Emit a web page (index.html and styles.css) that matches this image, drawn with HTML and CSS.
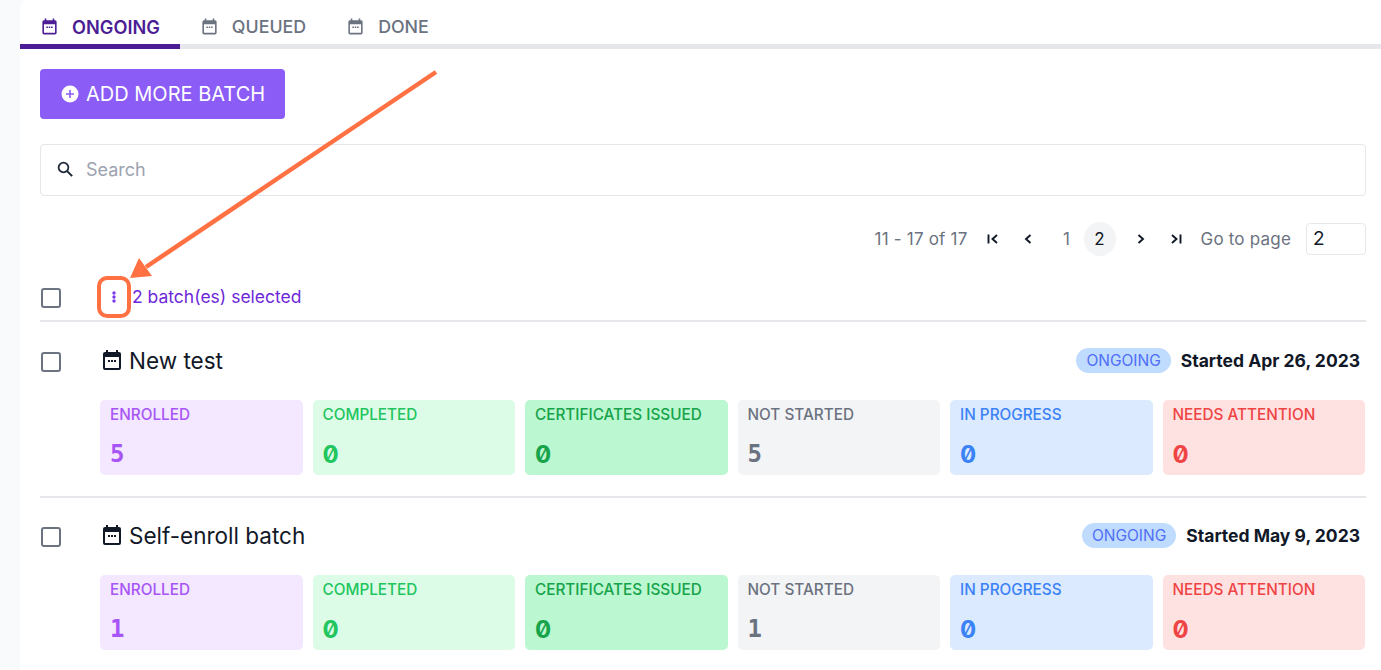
FILE: index.html
```html
<!DOCTYPE html>
<html>

<head>
  <meta charset="utf-8">
  <title>Batches</title>
  <link rel="stylesheet" href="styles.css">
</head>

<body>
  <svg width="0" height="0" class="defs">
    <symbol id="cal" viewBox="0 0 24 24">
      <path d="M19 4h-1V2h-2v2H8V2H6v2H5a2 2 0 0 0-2 2v14a2 2 0 0 0 2 2h14a2 2 0 0 0 2-2V6a2 2 0 0 0-2-2zm0 16H5V9h14v11zM8 12h2v2H8zm3 0h2v2h-2zm3 0h2v2h-2z" fill="currentColor"/>
    </symbol>
  </svg>
  <div class="panel">
    <div class="tabs">
      <a class="tab curr"><svg class="ico"><use href="#cal"/></svg>ONGOING</a>
      <a class="tab"><svg class="ico"><use href="#cal"/></svg>QUEUED</a>
      <a class="tab"><svg class="ico"><use href="#cal"/></svg>DONE</a>
    </div>
    <div class="cnt">
      <button class="add-btn">
        <svg width="18" height="18" viewBox="0 0 18 18"><circle cx="9" cy="9" r="8.5" fill="#fff"/><path d="M9 5v8M5 9h8" stroke="#8b5cf6" stroke-width="1.6"/></svg>
        ADD MORE BATCH
      </button>
      <div class="search">
        <svg width="18" height="18" viewBox="0 0 24 24"><circle cx="10" cy="10" r="6.500" fill="none" stroke="#1f2937" stroke-width="2.400"/><path d="M14.500 14.500 21.500 21.500" stroke="#1f2937" stroke-width="2.800"/></svg>
        <span>Search</span>
      </div>
      <div class="pager">
        <span class="range">11 - 17 of 17</span>
        <div class="pg-btns">
          <svg class="pg-ico" viewBox="0 0 16 16"><path d="M3.500 3.500v9M12 4 7.500 8l4.500 4" fill="none" stroke="#111827" stroke-width="1.900"/></svg>
          <svg class="pg-ico" viewBox="0 0 16 16"><path d="M10.500 4 6 8l4.500 4" fill="none" stroke="#111827" stroke-width="1.900"/></svg>
          <span class="pg-num">1</span>
          <span class="pg-num on">2</span>
          <svg class="pg-ico" viewBox="0 0 16 16"><path d="M5.500 4 10 8l-4.500 4" fill="none" stroke="#111827" stroke-width="1.900"/></svg>
          <svg class="pg-ico" viewBox="0 0 16 16"><path d="M12.500 3.500v9M4 4l4.500 4L4 12" fill="none" stroke="#111827" stroke-width="1.900"/></svg>
        </div>
        <span class="goto">Go to page</span>
        <div class="pg-input">2</div>
      </div>
      <div class="sel-row">
        <span class="check"></span>
        <div class="sel-info">
          <svg class="dots" width="4" height="12" viewBox="0 0 4 12"><circle cx="2" cy="2" r="1.700"/><circle cx="2" cy="6" r="1.700"/><circle cx="2" cy="10" r="1.700"/></svg>
          <span>2 batch(es) selected</span>
        </div>
      </div>

      <div class="batch">
        <span class="check"></span>
        <div class="batch-main">
          <div class="batch-head">
            <h3><svg class="ico-big"><use href="#cal"/></svg>New test</h3>
            <div class="batch-meta"><span class="badge">ONGOING</span><b>Started Apr 26, 2023</b></div>
          </div>
          <div class="stats">
            <div class="stat purple"><p>ENROLLED</p><strong>5</strong></div>
            <div class="stat green"><p>COMPLETED</p><strong class="nil">0</strong></div>
            <div class="stat mint"><p>CERTIFICATES ISSUED</p><strong class="nil">0</strong></div>
            <div class="stat gray"><p>NOT STARTED</p><strong>5</strong></div>
            <div class="stat blue"><p>IN PROGRESS</p><strong class="nil">0</strong></div>
            <div class="stat red"><p>NEEDS ATTENTION</p><strong class="nil">0</strong></div>
          </div>
        </div>
      </div>

      <div class="batch">
        <span class="check"></span>
        <div class="batch-main">
          <div class="batch-head">
            <h3><svg class="ico-big"><use href="#cal"/></svg>Self-enroll batch</h3>
            <div class="batch-meta"><span class="badge">ONGOING</span><b>Started May 9, 2023</b></div>
          </div>
          <div class="stats">
            <div class="stat purple"><p>ENROLLED</p><strong>1</strong></div>
            <div class="stat green"><p>COMPLETED</p><strong class="nil">0</strong></div>
            <div class="stat mint"><p>CERTIFICATES ISSUED</p><strong class="nil">0</strong></div>
            <div class="stat gray"><p>NOT STARTED</p><strong>1</strong></div>
            <div class="stat blue"><p>IN PROGRESS</p><strong class="nil">0</strong></div>
            <div class="stat red"><p>NEEDS ATTENTION</p><strong class="nil">0</strong></div>
          </div>
        </div>
      </div>
    </div>
  </div>

  <!-- annotation drawn over the screenshot -->
  <svg class="note" width="1381" height="670" viewBox="0 0 1381 670">
    <path d="M436 72 146 267" fill="none" stroke="#ff7043" stroke-width="4.500"/>
    <path d="M130 278 139 258 152 276z" fill="#ff7043"/>
    <rect x="99" y="278" width="30" height="38" rx="8" fill="none" stroke="#ff7043" stroke-width="4"/>
  </svg>
</body>

</html>
```

FILE: styles.css
```css
* {
  margin: 0;
  padding: 0;
  box-sizing: border-box;
}

html,
body {
  height: 670px;
  overflow: hidden;
}

body {
  position: relative;
  padding-left: 20px;
  background: #f9fafb;
  font-family: Inter, "Liberation Sans", sans-serif;
  color: #111827;
}

.defs {
  position: absolute;
}

.panel {
  height: 670px;
  background: #fff;
  border-radius: 8px 0 0 0;
}

.tabs {
  display: flex;
  height: 49px;
  border-bottom: 5px solid #e5e7eb;
}

.tab {
  display: flex;
  align-items: center;
  height: 49px;
  padding: 10px 20px 1px 20px;
  gap: 13px;
  font-size: 17.800px;
  font-weight: 500;
  color: #6b7280;
  border-bottom: 5px solid transparent;
}

.tab.curr {
  color: #4c1d95;
  border-bottom-color: #4c1d95;
  font-size: 18.200px;
  font-weight: 600;
}

.ico {
  width: 19px;
  height: 19px;
}

.cnt {
  padding: 20px 15px 0 20px;
}

.add-btn {
  display: flex;
  align-items: center;
  gap: 7px;
  width: 245px;
  height: 50px;
  padding-left: 21px;
  border: 0;
  border-radius: 4px;
  background: #8b5cf6;
  color: #fff;
  font: 400 20px Inter, "Liberation Sans", sans-serif;
}

.search {
  display: flex;
  align-items: center;
  gap: 12px;
  height: 52px;
  margin-top: 25px;
  padding: 0 0 2px 15px;
  border: 1px solid #e5e7eb;
  border-radius: 4px;
  font-size: 18px;
  color: #9ca3af;
}

.pager {
  display: flex;
  justify-content: flex-end;
  align-items: center;
  height: 34px;
  margin-top: 26px;
  font-size: 17px;
  letter-spacing: .2px;
  color: #6b7280;
}

.pg-btns {
  display: flex;
  align-items: center;
  margin: 0 17px;
}

.pg-ico {
  width: 16px;
  height: 16px;
  margin: 0 9.500px;
}

.pg-btns .pg-ico:nth-child(1),
.pg-btns .pg-ico:nth-child(5) {
  margin-left: 0;
}

.pg-btns .pg-ico:nth-child(2) {
  margin-right: 15px;
}

.pg-btns .pg-ico:nth-child(5) {
  margin-left: 17px;
}

.pg-btns .pg-ico:last-child {
  margin-right: 0;
}

.pg-num {
  width: 32px;
  height: 34px;
  line-height: 34px;
  text-align: center;
  border-radius: 50%;
}

.pg-num.on {
  margin-left: 1px;
  background: #f3f4f6;
  color: #111827;
}

.pg-input {
  width: 60px;
  height: 32px;
  margin-left: 15px;
  padding-left: 6px;
  border: 1px solid #e5e7eb;
  border-radius: 4px;
  font-size: 19px;
  line-height: 30px;
  color: #111827;
}

.sel-row {
  display: flex;
  align-items: center;
  height: 43px;
  margin-top: 23px;
  padding: 0 0 4px 1px;
  border-bottom: 2px solid #e5e7eb;
}

.check {
  flex: none;
  width: 20px;
  height: 20px;
  background: #fff;
  border: 2px solid #6b7280;
  border-radius: 3px;
}

.sel-info {
  display: flex;
  align-items: center;
  gap: 16px;
  margin: -2px 0 0 51px;
  font-size: 17.500px;
  color: #6d28d9;
}

.dots {
  fill: #7c3aed;
}

.batch {
  position: relative;
  display: flex;
  height: 176px;
  padding-left: 60px;
  border-bottom: 2px solid #e5e7eb;
}

.batch + .batch {
  margin-top: -1px;
}

.batch:last-child {
  border-bottom: 0;
}

.batch > .check {
  position: absolute;
  left: 1px;
  top: 30px;
}

.batch-main {
  flex: 1;
}

.batch-head {
  display: flex;
  justify-content: space-between;
  align-items: center;
  height: 76px;
  margin-bottom: 2px;
  padding-right: 6px;
}

.batch-head h3 {
  display: flex;
  align-items: center;
  gap: 5px;
  font-size: 22.500px;
  font-weight: 400;
}

.ico-big {
  width: 24px;
  height: 24px;
}

.batch-meta {
  display: flex;
  align-items: center;
  gap: 10px;
  font-size: 17.500px;
}

.batch-meta b {
  font-weight: 700;
}

.badge {
  padding: 2px 10px;
  border-radius: 13px;
  background: #bfdbfe;
  color: #4f6ef7;
  font-size: 15.500px;
  line-height: 21px;
}

.stats {
  display: grid;
  grid-template-columns: repeat(6, 1fr);
  gap: 10px;
  margin-right: 1px;
}

.stat {
  height: 75px;
  padding: 6px 10px;
  border-radius: 5px;
}

.stat p {
  font-size: 15.300px;
  font-weight: 500;
  line-height: 18px;
}

.stat strong {
  display: block;
  margin-top: 16px;
  font: 700 24px "DejaVu Sans Mono", monospace;
}

.stat strong.nil {
  font-family: Inter, "DejaVu Sans Mono", monospace;
  font-variant-numeric: slashed-zero;
}

.purple { background: #f3e8ff; color: #a855f7; }
.green { background: #dcfce7; color: #22c55e; }
.mint { background: #bbf7d0; color: #16a34a; }
.gray { background: #f3f4f6; color: #6b7280; }
.blue { background: #dbeafe; color: #3b82f6; }
.red { background: #fee2e2; color: #ef4444; }

.note {
  position: absolute;
  left: 0;
  top: 0;
  pointer-events: none;
}
```
